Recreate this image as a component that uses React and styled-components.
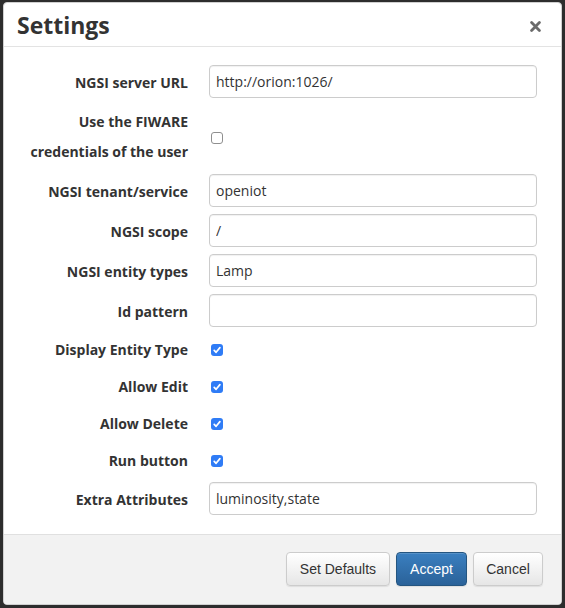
import React from 'react';
import styled, { createGlobalStyle } from 'styled-components';

const GlobalStyle = createGlobalStyle`
  html, body {
    margin: 0;
    padding: 0;
    background: #2d2d2d;
  }
  * {
    box-sizing: border-box;
  }
`;

const fields = [
  { label: 'NGSI server URL', type: 'text', value: 'http://orion:1026/' },
  { label: ['Use the FIWARE', 'credentials of the user'], type: 'check', checked: false },
  { label: 'NGSI tenant/service', type: 'text', value: 'openiot' },
  { label: 'NGSI scope', type: 'text', value: '/' },
  { label: 'NGSI entity types', type: 'text', value: 'Lamp' },
  { label: 'Id pattern', type: 'text', value: '' },
  { label: 'Display Entity Type', type: 'check', checked: true },
  { label: 'Allow Edit', type: 'check', checked: true },
  { label: 'Allow Delete', type: 'check', checked: true },
  { label: 'Run button', type: 'check', checked: true },
  { label: 'Extra Attributes', type: 'text', value: 'luminosity,state' },
];

const Checkbox = ({ checked }) => (
  <Box checked={checked}>
    {checked && (
      <svg width="12" height="12" viewBox="0 0 12 12">
        <path d="M3.2 6.3 L5.1 8.3 L8.9 3.6" fill="none" stroke="#fff" strokeWidth="1.7" strokeLinecap="round" strokeLinejoin="round" />
      </svg>
    )}
  </Box>
);

const App = () => (
  <Page>
    <GlobalStyle />
    <Dialog>
      <Header>
        <Title>Settings</Title>
        <Close aria-label="close">
          <svg width="11" height="11" viewBox="0 0 11 11">
            <path d="M1.6 1.6 L9.4 9.4 M9.4 1.6 L1.6 9.4" stroke="#6b6b6b" strokeWidth="2.8" strokeLinecap="round" />
          </svg>
        </Close>
      </Header>
      <Body>
        <Form>
          {fields.map((f, i) => (
            <React.Fragment key={i}>
              <Label multi={Array.isArray(f.label)} check={f.type === 'check'}>
                {Array.isArray(f.label) ? f.label.map((l) => <div key={l}>{l}</div>) : f.label}
              </Label>
              {f.type === 'text' ? (
                <Input defaultValue={f.value} />
              ) : (
                <CheckCell multi={Array.isArray(f.label)}>
                  <Checkbox checked={f.checked} />
                </CheckCell>
              )}
            </React.Fragment>
          ))}
        </Form>
      </Body>
      <Footer>
        <Button width={104}>Set Defaults</Button>
        <Button width={71} primary>Accept</Button>
        <Button width={70}>Cancel</Button>
      </Footer>
    </Dialog>
  </Page>
);

const Page = styled.div`
  height: 608px;
  padding: 2px 3px 3px 3px;
  display: flex;
`;

const Dialog = styled.div`
  flex: 1;
  display: flex;
  flex-direction: column;
  background: #fff;
  border: 1px solid #d0d0d0;
  border-radius: 4px;
  overflow: hidden;
`;

const Header = styled.div`
  height: 45px;
  display: flex;
  align-items: center;
  justify-content: space-between;
  padding: 0 20px 0 13px;
  border-bottom: 1px solid #e3e3e3;
`;

const Title = styled.h1`
  margin: 0;
  font-family: "Open Sans", sans-serif;
  font-weight: 700;
  font-size: 23px;
  color: #333;
  line-height: 1;
  margin-top: 2px;
`;

const Close = styled.span`
  display: flex;
  width: 11px;
  height: 11px;
  margin-top: 3px;
`;

const Body = styled.div`
  flex: 1;
  padding: 18px 24px 19px 14px;
`;

const Form = styled.div`
  display: grid;
  grid-template-columns: 170px 1fr;
  column-gap: 21px;
  row-gap: 7px;
`;

const Label = styled.div`
  text-align: right;
  align-self: center;
  font-family: "Open Sans", sans-serif;
  font-weight: 700;
  font-size: 14px;
  color: #333;
  padding-top: ${(p) => (p.check && !p.multi ? '1px' : '2px')};
  line-height: ${(p) => (p.multi ? '30px' : p.check ? '29px' : '31px')};
`;

const Input = styled.input`
  height: 33px;
  width: 100%;
  border: 1px solid #ccc;
  border-radius: 4px;
  padding: 0 6px;
  font-family: "Open Sans", sans-serif;
  font-size: 14px;
  color: #333;
  background: #fff;
  box-shadow: inset 0 1px 1px rgba(0, 0, 0, 0.06);
  outline: none;
`;

const CheckCell = styled.div`
  display: flex;
  align-items: center;
  padding: ${(p) => (p.multi ? '3px' : '1px')} 0 0 2px;
`;

const Box = styled.span`
  display: flex;
  align-items: center;
  justify-content: center;
  width: 12px;
  height: 12px;
  border-radius: 3px;
  background: ${(p) => (p.checked ? '#2f7cf6' : '#fff')};
  border: ${(p) => (p.checked ? 'none' : '1px solid #8f8f8f')};
`;

const Footer = styled.div`
  height: 71px;
  background: #f2f2f2;
  border-top: 1px solid #e0e0e0;
  display: flex;
  justify-content: flex-end;
  align-items: flex-start;
  gap: 6px;
  padding: 17px 18px 0 0;
`;

const Button = styled.button`
  height: 34px;
  width: ${(p) => p.width}px;
  padding: 0;
  border-radius: 4px;
  font-family: "Liberation Sans", Arial, sans-serif;
  font-size: 14px;
  cursor: pointer;
  color: ${(p) => (p.primary ? '#fff' : '#333')};
  border: 1px solid ${(p) => (p.primary ? '#245580' : '#ccc')};
  background: ${(p) =>
    p.primary
      ? 'linear-gradient(to bottom, #3a7fc0 0%, #2a6299 100%)'
      : 'linear-gradient(to bottom, #fff 0%, #e6e6e6 100%)'};
  box-shadow: inset 0 1px 0 rgba(255, 255, 255, 0.15), 0 1px 1px rgba(0, 0, 0, 0.08);
`;

export default App;
